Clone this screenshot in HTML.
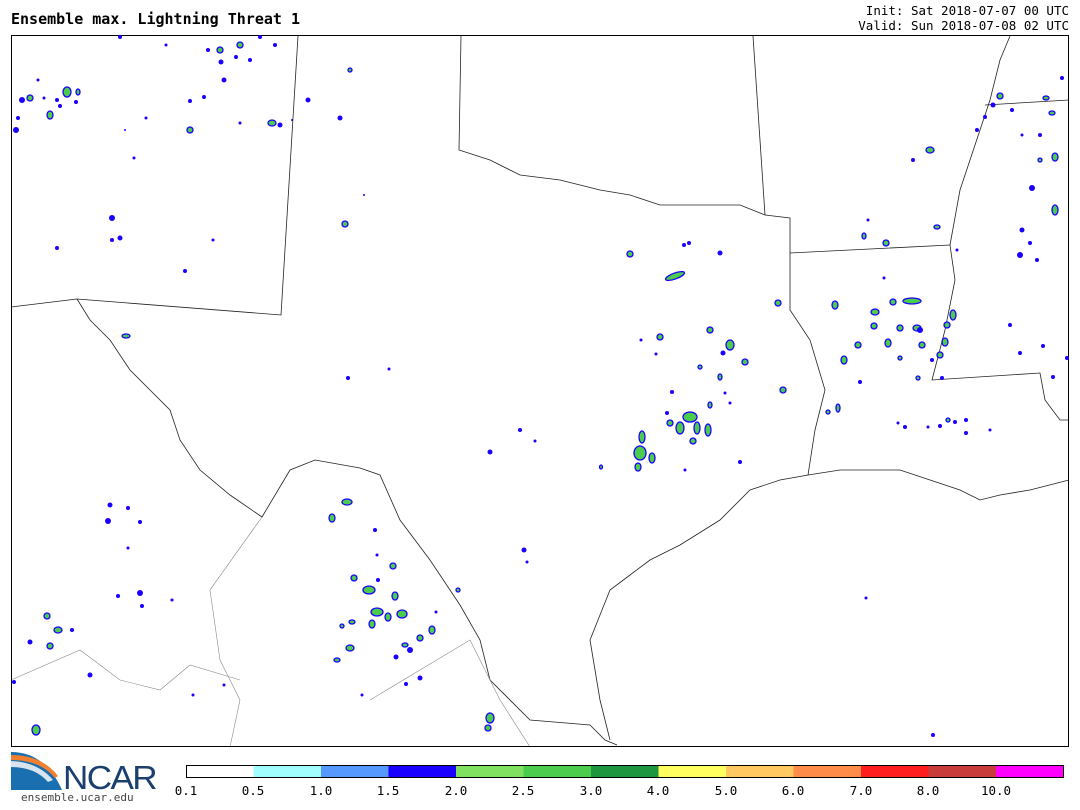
<!DOCTYPE html>
<html><head><style>
body{margin:0;width:1080px;height:810px;background:#fff;position:relative;overflow:hidden;font-family:"DejaVu Sans Mono","Liberation Mono",monospace;}
.t{position:absolute;white-space:pre;color:#000}
.g ellipse{fill:#4ccc4c;stroke:#1a00ff;stroke-width:1.3}
.b circle{fill:#1a00ff}
</style></head><body>
<div class="t" style="left:11px;top:10px;font-size:15px;font-weight:bold">Ensemble max. Lightning Threat 1</div>
<div class="t" style="right:11px;top:3px;font-size:12.5px;text-align:right;line-height:15px">Init: Sat 2018-07-07 00 UTC
Valid: Sun 2018-07-08 02 UTC</div>
<svg style="position:absolute;left:0;top:0" width="1080" height="810">
<g fill="none" stroke="#222" stroke-width="0.8">
<polyline points="298,36 281,315 77,299 11,307"/>
<polyline points="461,36 459,150 490,160 520,175 560,180 600,190 630,195 660,205 700,205 740,205 765,215 790,218 790,253 950,245"/>
<polyline points="753,36 765,215"/>
<polyline points="77,299 90,320 110,340 130,370 150,390 170,410 180,440 200,470 230,495 262,517 290,470 315,460 360,468 380,475 400,520 430,560 460,605 480,640 490,680 530,720 590,725 605,740 617,745"/>
<polyline points="790,253 790,310 810,340 825,390 815,430 808,475 780,480 750,490 720,520 680,545 650,560 630,575 610,590 600,615 590,640 600,700 610,740"/>
<polyline points="950,245 955,280 945,330 932,380 1040,373 1045,400 1060,420 1069,420"/>
<polyline points="808,475 840,470 900,470 930,480 960,490 980,500 1000,495 1030,490 1069,480"/>
<polyline points="950,245 960,190 980,130 990,100 1000,60 1010,36"/>
<polyline points="985,105 1069,100"/>
</g>
<g fill="none" stroke="#888" stroke-width="0.6">
<polyline points="262,517 210,590 220,660 240,700 230,747"/>
<polyline points="11,680 80,650 120,680 160,690 190,665 240,680"/>
<polyline points="370,700 420,670 470,640 500,700 530,747"/>
</g>
<rect x="11.5" y="35.5" width="1057" height="711" fill="none" stroke="#000" stroke-width="1"/>
<g class="g">
<ellipse cx="630" cy="254" rx="3" ry="3"/><ellipse cx="675" cy="276" rx="10" ry="3" transform="rotate(-20 675 276)"/><ellipse cx="660" cy="337" rx="3" ry="3"/><ellipse cx="710" cy="330" rx="3" ry="3"/><ellipse cx="730" cy="345" rx="4" ry="5"/><ellipse cx="745" cy="362" rx="3" ry="3"/><ellipse cx="700" cy="367" rx="2" ry="2"/><ellipse cx="720" cy="377" rx="2" ry="3"/><ellipse cx="783" cy="390" rx="3" ry="3"/><ellipse cx="778" cy="303" rx="3" ry="3"/><ellipse cx="710" cy="405" rx="2" ry="3"/><ellipse cx="690" cy="417" rx="7" ry="5"/><ellipse cx="670" cy="423" rx="3" ry="3"/><ellipse cx="680" cy="428" rx="4" ry="6"/><ellipse cx="697" cy="428" rx="3" ry="6"/><ellipse cx="708" cy="430" rx="3" ry="6"/><ellipse cx="693" cy="441" rx="3" ry="3"/><ellipse cx="642" cy="437" rx="3" ry="6"/><ellipse cx="640" cy="453" rx="6" ry="7"/><ellipse cx="652" cy="458" rx="3" ry="5"/><ellipse cx="638" cy="467" rx="3" ry="4"/><ellipse cx="601" cy="467" rx="1.5" ry="2"/>
<ellipse cx="347" cy="502" rx="5" ry="3"/><ellipse cx="332" cy="518" rx="3" ry="4"/><ellipse cx="354" cy="578" rx="3" ry="3"/><ellipse cx="369" cy="590" rx="6" ry="4"/><ellipse cx="393" cy="566" rx="3" ry="3"/><ellipse cx="395" cy="596" rx="3" ry="4"/><ellipse cx="377" cy="612" rx="6" ry="4"/><ellipse cx="372" cy="624" rx="3" ry="4"/><ellipse cx="388" cy="617" rx="3" ry="4"/><ellipse cx="402" cy="614" rx="5" ry="4"/><ellipse cx="432" cy="630" rx="3" ry="4"/><ellipse cx="420" cy="638" rx="3" ry="3"/><ellipse cx="405" cy="645" rx="3" ry="2"/><ellipse cx="350" cy="648" rx="4" ry="3"/><ellipse cx="337" cy="660" rx="3" ry="2"/><ellipse cx="490" cy="718" rx="4" ry="5"/><ellipse cx="488" cy="728" rx="3" ry="3"/>
<ellipse cx="47" cy="616" rx="3" ry="3"/><ellipse cx="58" cy="630" rx="4" ry="3"/><ellipse cx="50" cy="646" rx="3" ry="3"/><ellipse cx="36" cy="730" rx="4" ry="5"/>
<ellipse cx="67" cy="92" rx="4" ry="5"/><ellipse cx="50" cy="115" rx="3" ry="4"/><ellipse cx="78" cy="92" rx="2" ry="3"/><ellipse cx="30" cy="98" rx="3" ry="3"/><ellipse cx="220" cy="50" rx="3" ry="3"/><ellipse cx="240" cy="45" rx="3" ry="3"/><ellipse cx="190" cy="130" rx="3" ry="3"/><ellipse cx="272" cy="123" rx="4" ry="3"/><ellipse cx="350" cy="70" rx="2" ry="2"/><ellipse cx="126" cy="336" rx="4" ry="2"/><ellipse cx="345" cy="224" rx="3" ry="3"/>
<ellipse cx="835" cy="305" rx="3" ry="4"/><ellipse cx="858" cy="345" rx="3" ry="3"/><ellipse cx="875" cy="312" rx="4" ry="3"/><ellipse cx="874" cy="326" rx="3" ry="3"/><ellipse cx="888" cy="343" rx="3" ry="4"/><ellipse cx="893" cy="302" rx="3" ry="3"/><ellipse cx="912" cy="301" rx="9" ry="3"/><ellipse cx="917" cy="328" rx="4" ry="3"/><ellipse cx="900" cy="328" rx="3" ry="3"/><ellipse cx="945" cy="342" rx="3" ry="4"/><ellipse cx="953" cy="315" rx="3" ry="5"/><ellipse cx="947" cy="325" rx="3" ry="3"/><ellipse cx="922" cy="345" rx="3" ry="3"/><ellipse cx="940" cy="355" rx="3" ry="3"/><ellipse cx="900" cy="358" rx="2" ry="2"/><ellipse cx="844" cy="360" rx="3" ry="4"/><ellipse cx="828" cy="412" rx="2" ry="2"/><ellipse cx="838" cy="408" rx="2" ry="4"/><ellipse cx="930" cy="150" rx="4" ry="3"/><ellipse cx="1000" cy="96" rx="3" ry="3"/><ellipse cx="1055" cy="157" rx="3" ry="4"/><ellipse cx="1052" cy="113" rx="3" ry="2"/><ellipse cx="1055" cy="210" rx="3" ry="5"/><ellipse cx="1040" cy="160" rx="2" ry="2"/><ellipse cx="1046" cy="98" rx="3" ry="2"/><ellipse cx="937" cy="227" rx="3" ry="2"/><ellipse cx="886" cy="243" rx="3" ry="3"/><ellipse cx="864" cy="236" rx="2" ry="3"/><ellipse cx="948" cy="420" rx="2" ry="2"/><ellipse cx="918" cy="378" rx="2" ry="2"/><ellipse cx="458" cy="590" rx="2" ry="2"/><ellipse cx="352" cy="622" rx="3" ry="2"/><ellipse cx="342" cy="626" rx="2" ry="2"/>
</g>
<g class="b">
<circle cx="348" cy="378" r="2"/><circle cx="389" cy="369" r="1.5"/><circle cx="490" cy="452" r="2.5"/><circle cx="520" cy="430" r="2"/><circle cx="535" cy="441" r="1.5"/><circle cx="185" cy="271" r="2"/><circle cx="134" cy="158" r="1.5"/><circle cx="213" cy="240" r="1.5"/><circle cx="57" cy="248" r="2"/><circle cx="112" cy="218" r="3"/><circle cx="120" cy="238" r="2.5"/><circle cx="112" cy="240" r="2"/><circle cx="340" cy="118" r="2.5"/><circle cx="308" cy="100" r="2.5"/><circle cx="240" cy="123" r="1.5"/><circle cx="280" cy="125" r="2.5"/><circle cx="120" cy="37" r="2"/><circle cx="260" cy="37" r="2"/><circle cx="108" cy="521" r="3"/><circle cx="110" cy="505" r="2.5"/><circle cx="128" cy="508" r="2"/><circle cx="140" cy="522" r="2"/><circle cx="128" cy="548" r="1.5"/><circle cx="142" cy="606" r="2"/><circle cx="172" cy="600" r="1.5"/><circle cx="140" cy="593" r="3"/><circle cx="118" cy="596" r="2"/><circle cx="30" cy="642" r="2.5"/><circle cx="72" cy="630" r="2"/><circle cx="90" cy="675" r="2.5"/><circle cx="14" cy="682" r="2"/><circle cx="193" cy="695" r="1.5"/><circle cx="224" cy="685" r="1.5"/><circle cx="362" cy="695" r="1.5"/><circle cx="406" cy="684" r="2"/><circle cx="420" cy="678" r="2.5"/><circle cx="375" cy="530" r="2"/><circle cx="377" cy="555" r="1.5"/><circle cx="378" cy="580" r="2"/><circle cx="436" cy="612" r="1.5"/><circle cx="396" cy="657" r="2.5"/><circle cx="410" cy="650" r="3"/><circle cx="524" cy="550" r="2.5"/><circle cx="527" cy="562" r="1.5"/><circle cx="641" cy="340" r="1.5"/><circle cx="656" cy="354" r="1.5"/><circle cx="684" cy="245" r="2"/><circle cx="689" cy="243" r="2"/><circle cx="720" cy="253" r="2.5"/><circle cx="740" cy="462" r="2"/><circle cx="685" cy="470" r="1.5"/><circle cx="723" cy="353" r="2.5"/><circle cx="725" cy="393" r="1.5"/><circle cx="672" cy="392" r="2"/><circle cx="667" cy="413" r="2"/><circle cx="730" cy="403" r="1.5"/><circle cx="898" cy="423" r="1.5"/><circle cx="905" cy="427" r="2"/><circle cx="928" cy="427" r="1.5"/><circle cx="940" cy="426" r="2"/><circle cx="955" cy="422" r="2"/><circle cx="966" cy="420" r="2"/><circle cx="966" cy="433" r="2"/><circle cx="990" cy="430" r="1.5"/><circle cx="1020" cy="353" r="2"/><circle cx="1043" cy="346" r="2"/><circle cx="1053" cy="377" r="2"/><circle cx="1022" cy="230" r="2.5"/><circle cx="1030" cy="243" r="2"/><circle cx="1037" cy="260" r="2"/><circle cx="1020" cy="255" r="3"/><circle cx="1012" cy="110" r="2"/><circle cx="1032" cy="188" r="3"/><circle cx="1040" cy="135" r="2"/><circle cx="1022" cy="135" r="1.5"/><circle cx="993" cy="105" r="2.5"/><circle cx="985" cy="117" r="2"/><circle cx="977" cy="130" r="2"/><circle cx="1062" cy="78" r="2"/><circle cx="1067" cy="358" r="2"/><circle cx="16" cy="130" r="3"/><circle cx="18" cy="118" r="2"/><circle cx="22" cy="100" r="3"/><circle cx="38" cy="80" r="1.5"/><circle cx="57" cy="100" r="2"/><circle cx="60" cy="106" r="2"/><circle cx="76" cy="102" r="2"/><circle cx="204" cy="97" r="2"/><circle cx="190" cy="101" r="2"/><circle cx="221" cy="62" r="2.5"/><circle cx="236" cy="57" r="2"/><circle cx="250" cy="60" r="2"/><circle cx="224" cy="80" r="2.5"/><circle cx="208" cy="50" r="2"/><circle cx="146" cy="118" r="1.5"/><circle cx="166" cy="45" r="1.5"/><circle cx="275" cy="45" r="2"/><circle cx="866" cy="598" r="1.5"/><circle cx="933" cy="735" r="2"/><circle cx="913" cy="160" r="2"/><circle cx="920" cy="330" r="3"/><circle cx="942" cy="378" r="2"/><circle cx="932" cy="360" r="2"/><circle cx="860" cy="382" r="2"/><circle cx="884" cy="278" r="1.5"/><circle cx="868" cy="220" r="1.5"/><circle cx="957" cy="250" r="1.5"/><circle cx="1010" cy="325" r="2"/><circle cx="364" cy="195" r="1"/><circle cx="292" cy="120" r="1"/><circle cx="44" cy="98" r="1.5"/><circle cx="125" cy="130" r="1"/>
</g>
<!-- logo -->
<path d="M11,752 Q45,752 62,790 L11,790 Z" fill="#1a6fb0"/>
<path d="M11,755 Q42,755 58,776 L55,778 Q40,760 11,760 Z" fill="#f08030"/>
<path d="M11,761 Q38,762 53,780 L48,782 Q35,767 11,767 Z" fill="#d8e4f0"/>
<text x="63" y="789" font-family="Liberation Sans,sans-serif" font-size="33" fill="#1b3f6e" letter-spacing="-1.5" textLength="93" lengthAdjust="spacingAndGlyphs">NCAR</text>
<text x="21" y="801" font-family="DejaVu Sans Mono,monospace" font-size="11" fill="#444">ensemble.ucar.edu</text>
<!-- colorbar -->
<g stroke="none">
<rect x="186" y="765" width="67.5" height="12" fill="#fff"/>
<rect x="253.5" y="765" width="67.5" height="12" fill="#a0fffe"/>
<rect x="321" y="765" width="67.5" height="12" fill="#5599ff"/>
<rect x="388.5" y="765" width="67.5" height="12" fill="#1a00ff"/>
<rect x="456" y="765" width="67.5" height="12" fill="#80e060"/>
<rect x="523.5" y="765" width="67.5" height="12" fill="#4ccc4c"/>
<rect x="591" y="765" width="67.5" height="12" fill="#1e9640"/>
<rect x="658.5" y="765" width="67.5" height="12" fill="#ffff60"/>
<rect x="726" y="765" width="67.5" height="12" fill="#ffc860"/>
<rect x="793.5" y="765" width="67.5" height="12" fill="#ff8c48"/>
<rect x="861" y="765" width="67.5" height="12" fill="#ff1e1e"/>
<rect x="928.5" y="765" width="67.5" height="12" fill="#c83c3c"/>
<rect x="996" y="765" width="68" height="12" fill="#ff00ff"/>
</g>
<rect x="186.5" y="765.5" width="877" height="12" fill="none" stroke="#000" stroke-width="1"/>
<g font-family="DejaVu Sans Mono,monospace" font-size="12.5" fill="#000" text-anchor="middle">
<text x="186" y="795">0.1</text><text x="253" y="795">0.5</text><text x="321" y="795">1.0</text><text x="388" y="795">1.5</text><text x="456" y="795">2.0</text><text x="523" y="795">2.5</text><text x="591" y="795">3.0</text><text x="658" y="795">4.0</text><text x="726" y="795">5.0</text><text x="793" y="795">6.0</text><text x="861" y="795">7.0</text><text x="928" y="795">8.0</text><text x="996" y="795">10.0</text>
</g>
</svg>
</body></html>
